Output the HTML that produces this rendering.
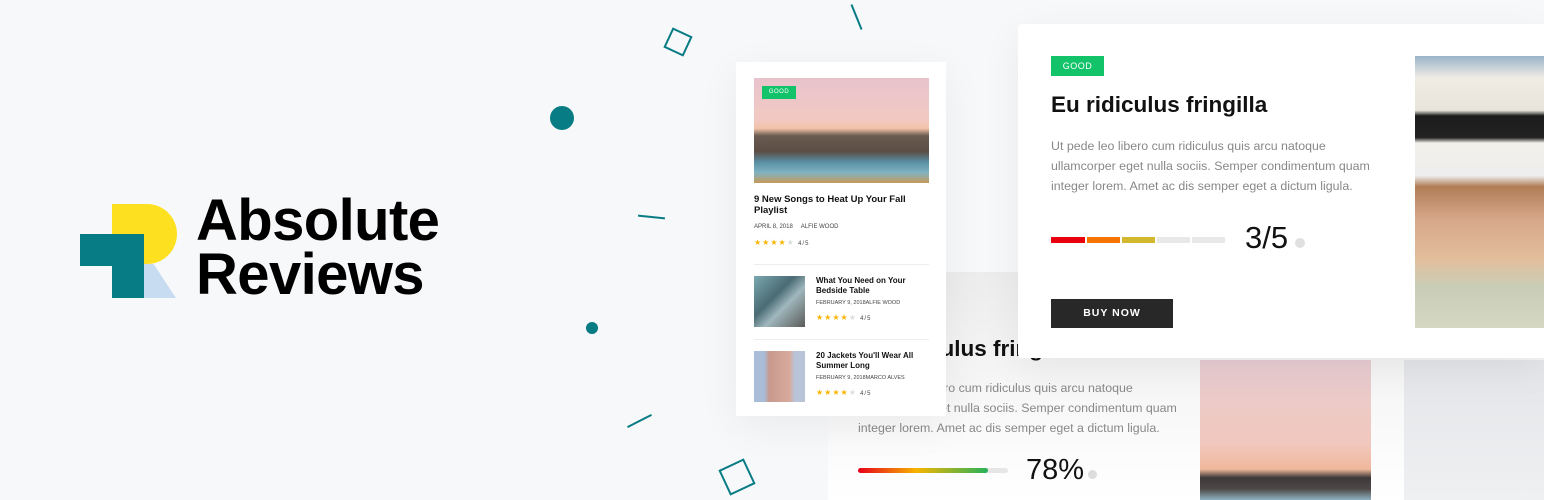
<!DOCTYPE html>
<html><head><meta charset="utf-8"><style>
*{margin:0;padding:0;box-sizing:border-box}
body{width:1544px;height:500px;overflow:hidden;background:#f7f8fa;font-family:"Liberation Sans",sans-serif;position:relative}
.abs{position:absolute}
.logo{left:196px;top:194px;font-weight:bold;font-size:58px;line-height:54px;letter-spacing:-0.6px;color:#000}
.sq{border:2px solid #087c85}
.dot{background:#087c85;border-radius:50%}
.line{height:2px;background:#087c85}
.card1{left:736px;top:62px;width:210px;height:354px;background:#fff;box-shadow:0 10px 40px rgba(0,0,0,.06)}
.bridge{background:linear-gradient(180deg,#e8c3cc 0%,#f2c9c2 40%,#f2c3a8 48%,#6b5c52 55%,#5b4d44 70%,#5a8ea3 80%,#7fb3c2 90%,#c79a5a 100%)}
.good{background:#13c36a;color:#fff;font-size:7px;text-align:center;letter-spacing:.5px}
.t{font-weight:bold;color:#111}
.meta{font-size:6px;color:#444}
.stars{color:#f9b400;font-size:8px;letter-spacing:1px}
.stars i{color:#ddd;font-style:normal}
.card3{left:828px;top:272px;width:716px;height:228px;background:linear-gradient(180deg,#ececec,#f8f8f8 60%,#fff)}
.card2{left:1018px;top:24px;width:526px;height:334px;background:#fff;box-shadow:0 10px 40px rgba(0,0,0,.06);border-radius:4px 0 0 4px}
.p{font-size:12.4px;line-height:20px;color:#888}
</style></head><body>
<div class="abs" style="left:112px;top:204px;width:65px;height:60px;background:#fde020;border-radius:0 30px 30px 0"></div>
<div class="abs" style="left:144px;top:264px;width:32px;height:34px;background:#c8dcf1;clip-path:polygon(0 0,0 100%,100% 100%,30% 0)"></div>
<div class="abs" style="left:80px;top:234px;width:64px;height:32px;background:#087c85"></div>
<div class="abs" style="left:112px;top:234px;width:32px;height:64px;background:#087c85"></div>
<div class="abs logo">Absolute<br>Reviews</div>

<div class="abs sq" style="left:667px;top:31px;width:22px;height:22px;transform:rotate(25deg)"></div>
<div class="abs sq" style="left:723px;top:463px;width:28px;height:28px;transform:rotate(-25deg)"></div>
<div class="abs dot" style="left:550px;top:106px;width:24px;height:24px"></div>
<div class="abs dot" style="left:586px;top:322px;width:12px;height:12px"></div>
<div class="abs dot" style="left:1480px;top:392px;width:32px;height:32px"></div>
<div class="abs line" style="left:638px;top:216px;width:27px;transform:rotate(6deg)"></div>
<div class="abs line" style="left:626px;top:420px;width:27px;transform:rotate(-27deg)"></div>
<div class="abs line" style="left:843px;top:16px;width:27px;transform:rotate(68deg)"></div>
<div class="abs line" style="left:1446px;top:479px;width:30px;transform:rotate(55deg)"></div>

<div class="abs card3">
  <div class="abs" style="left:30px;top:64px;font-size:22.5px;font-weight:bold;color:#111">Eu ridiculus fringilla</div>
  <div class="abs p" style="left:30px;top:106px;width:340px">Ut pede leo libero cum ridiculus quis arcu natoque ullamcorper eget nulla sociis. Semper condimentum quam integer lorem. Amet ac dis semper eget a dictum ligula.</div>
  <div class="abs" style="left:30px;top:196px;width:150px;height:5px;border-radius:3px;background:#e6e6e6"></div>
  <div class="abs" style="left:30px;top:196px;width:130px;height:5px;border-radius:3px;background:linear-gradient(90deg,#e8001a,#f6b400 45%,#26b25b)"></div>
  <div class="abs" style="left:198px;top:182px;font-size:29px;color:#111">78%</div>
  <div class="abs" style="left:260px;top:198px;width:9px;height:9px;border-radius:50%;background:#ddd"></div>
  <div class="abs" style="left:372px;top:88px;width:171px;height:140px;background:linear-gradient(180deg,#e7ccd2,#f1c8bd 60%,#f0b89c 78%,#3e3a3a 84%,#4d4747 92%,#8eb1c0)"></div>
  <div class="abs" style="left:576px;top:88px;width:140px;height:140px;background:linear-gradient(180deg,#e4e5e8,#eef0f2)"></div>
</div>

<div class="abs card1">
  <div class="abs bridge" style="left:18px;top:16px;width:175px;height:105px"></div>
  <div class="abs good" style="left:26px;top:24px;width:34px;height:13px;line-height:13px;font-size:6px">GOOD</div>
  <div class="abs t" style="left:18px;top:133px;width:180px;font-size:9.5px;line-height:10.5px">9 New Songs to Heat Up Your Fall Playlist</div>
  <div class="abs meta" style="left:18px;top:162px">APRIL 8, 2018 &nbsp;&nbsp;&nbsp; ALFIE WOOD</div>
  <div class="abs stars" style="left:18px;top:176px">★★★★<i>★</i> <span style="color:#444;font-size:6px">4/5</span></div>
  <div class="abs" style="left:18px;top:202px;width:175px;height:1px;background:#eee"></div>
  <div class="abs" style="left:18px;top:214px;width:51px;height:51px;background:linear-gradient(135deg,#7aa8b0,#4a6b73 40%,#9fb7bd 60%,#5a5a58)"></div>
  <div class="abs t" style="left:80px;top:214px;width:115px;font-size:8px;line-height:9.5px">What You Need on Your Bedside Table</div>
  <div class="abs meta" style="left:80px;top:238px;font-size:5.5px">FEBRUARY 9, 2018ALFIE WOOD</div>
  <div class="abs stars" style="left:80px;top:251px">★★★★<i>★</i> <span style="color:#444;font-size:6px">4/5</span></div>
  <div class="abs" style="left:18px;top:277px;width:175px;height:1px;background:#eee"></div>
  <div class="abs" style="left:18px;top:289px;width:51px;height:51px;background:linear-gradient(90deg,#a9bcd8 20%,#c89a8e 30%,#d8aa9c 70%,#b9c4d8 80%)"></div>
  <div class="abs t" style="left:80px;top:289px;width:115px;font-size:8px;line-height:9.5px">20 Jackets You'll Wear All Summer Long</div>
  <div class="abs meta" style="left:80px;top:313px;font-size:5.5px">FEBRUARY 9, 2018MARCO ALVES</div>
  <div class="abs stars" style="left:80px;top:326px">★★★★<i>★</i> <span style="color:#444;font-size:6px">4/5</span></div>
</div>

<div class="abs card2">
  <div class="abs good" style="left:33px;top:32px;width:53px;height:20px;line-height:20px;font-size:9px">GOOD</div>
  <div class="abs t" style="left:33px;top:68px;font-size:22.5px;font-weight:bold">Eu ridiculus fringilla</div>
  <div class="abs p" style="left:33px;top:112px;width:340px">Ut pede leo libero cum ridiculus quis arcu natoque ullamcorper eget nulla sociis. Semper condimentum quam integer lorem. Amet ac dis semper eget a dictum ligula.</div>
  <div class="abs" style="left:33px;top:213px;width:34px;height:6px;background:#e8000f"></div>
  <div class="abs" style="left:69px;top:213px;width:33px;height:6px;background:#f57500"></div>
  <div class="abs" style="left:104px;top:213px;width:33px;height:6px;background:#d1b82e"></div>
  <div class="abs" style="left:139px;top:213px;width:33px;height:6px;background:#e8e8e8"></div>
  <div class="abs" style="left:174px;top:213px;width:33px;height:6px;background:#e8e8e8"></div>
  <div class="abs" style="left:227px;top:196px;font-size:31px;color:#111">3/5</div>
  <div class="abs" style="left:277px;top:214px;width:10px;height:10px;border-radius:50%;background:#e0e0e0"></div>
  <div class="abs" style="left:33px;top:275px;width:122px;height:29px;background:#282828;color:#fff;font-size:10.5px;font-weight:bold;letter-spacing:1px;text-align:center;line-height:29px">BUY NOW</div>
  <div class="abs" style="left:397px;top:32px;width:129px;height:272px;background:linear-gradient(180deg,#9bb4c8 0%,#efece4 8%,#e8e4da 20%,#1c1c1c 22%,#222 30%,#f2f0ea 32%,#eee 44%,#b07d55 48%,#d7a78a 60%,#e2bf9c 75%,#c9cdb6 85%,#d5d7c4 100%)"></div>
</div>
</body></html>
